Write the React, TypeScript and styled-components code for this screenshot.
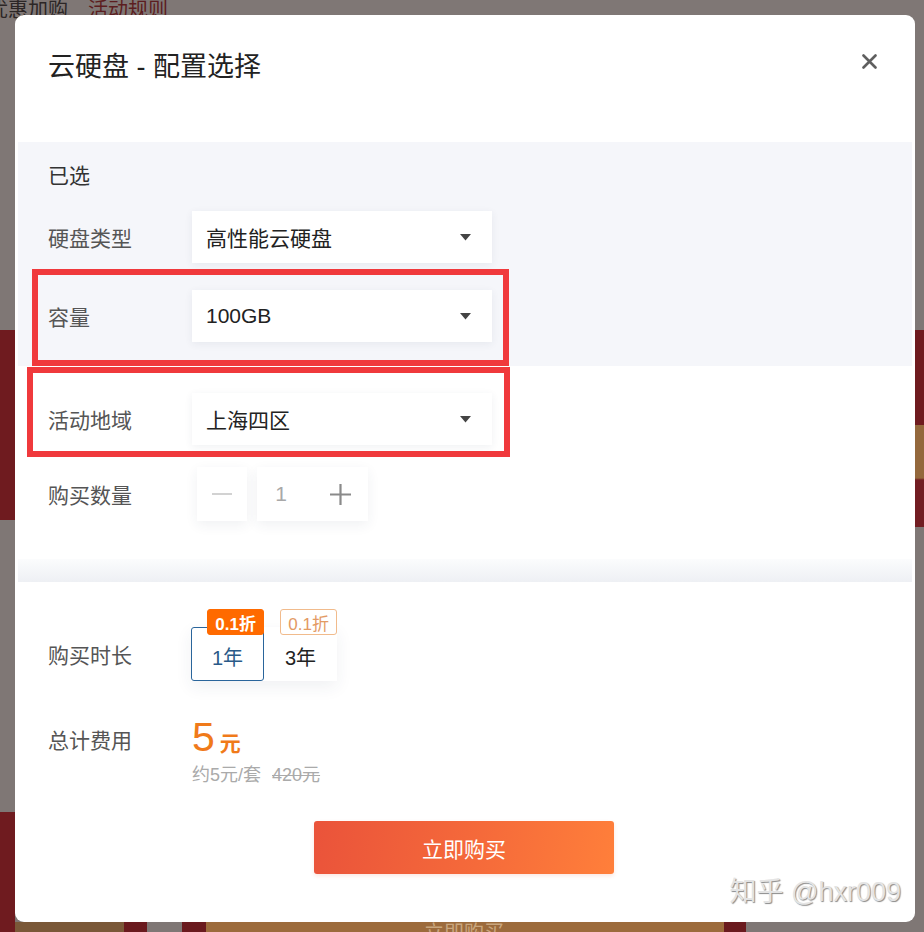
import React from "react";
import styled, { createGlobalStyle } from "styled-components";

const GlobalStyle = createGlobalStyle`
  html, body {
    margin: 0;
    padding: 0;
    height: 100%;
  }
  body {
    font-family: "Liberation Sans", "Noto Sans CJK SC", sans-serif;
    color: #222;
    overflow: hidden;
  }
`;

const Caret = () => (
  <svg width="11" height="7" viewBox="0 0 11 7">
    <path d="M0 0 L11 0 L5.5 6.5 Z" fill="#444" />
  </svg>
);

const CloseIcon = () => (
  <svg width="15" height="15" viewBox="0 0 15 15">
    <path d="M1.5 1.5 L13.5 13.5 M13.5 1.5 L1.5 13.5" stroke="#5f5f5f" strokeWidth="2.6" strokeLinecap="round" />
  </svg>
);

const Select = ({ value }: { value: string }) => (
  <SelectBox>
    <span>{value}</span>
    <Caret />
  </SelectBox>
);

const durations = [
  { label: "1年", badge: "0.1折", active: true },
  { label: "3年", badge: "0.1折", active: false },
];

const App = () => {
  return (
    <>
      <GlobalStyle />
      <Overlay>
        <PageHint>
          <span>优惠加购</span>
          <RuleText>活动规则</RuleText>
        </PageHint>
        <BottomHint>立即购买</BottomHint>
        <Modal>
          <Header>
            <Title>云硬盘 - 配置选择</Title>
            <CloseButton>
              <CloseIcon />
            </CloseButton>
          </Header>

          <GraySection>
            <Chosen>已选</Chosen>
            <Row>
              <Label>硬盘类型</Label>
              <Select value="高性能云硬盘" />
            </Row>
            <Row>
              <Label>容量</Label>
              <Select value="100GB" />
            </Row>
          </GraySection>

          <WhiteSection>
            <Row>
              <Label>活动地域</Label>
              <Select value="上海四区" />
            </Row>
            <Row>
              <Label>购买数量</Label>
              <Stepper>
                <StepButton $muted>
                  <svg width="20" height="20" viewBox="0 0 20 20">
                    <path d="M0 10 H20" stroke="#d2d2d2" strokeWidth="2" />
                  </svg>
                </StepButton>
                <CountGroup>
                  <Count>1</Count>
                  <StepButton>
                    <svg width="21" height="21" viewBox="0 0 21 21">
                      <path d="M0 10.5 H21 M10.5 0 V21" stroke="#8a8a8a" strokeWidth="2.2" />
                    </svg>
                  </StepButton>
                </CountGroup>
              </Stepper>
            </Row>
          </WhiteSection>

          <Divider />

          <LowerSection>
            <Row>
              <Label>购买时长</Label>
              <Durations>
                {durations.map((d) => (
                  <Duration key={d.label} $active={d.active}>
                    <Badge $filled={d.active}>{d.badge}</Badge>
                    {d.label}
                  </Duration>
                ))}
              </Durations>
            </Row>
            <TotalRow>
              <Label>总计费用</Label>
              <PriceBlock>
                <PriceLine>
                  <PriceNum>5</PriceNum>
                  <PriceUnit>元</PriceUnit>
                </PriceLine>
                <SubPrice>
                  约5元/套<OldPrice>420元</OldPrice>
                </SubPrice>
              </PriceBlock>
            </TotalRow>
            <BuyButton>立即购买</BuyButton>
          </LowerSection>

          <Mark $top={254} $left={17} $width={477} $height={97} />
          <Mark $top={352} $left={12} $width={483} $height={90} />
          <Watermark>知乎 @hxr009</Watermark>
        </Modal>
      </Overlay>
    </>
  );
};

const Overlay = styled.div`
  position: fixed;
  inset: 0;
  padding: 15px 9px 10px 15px;
  display: flex;
  flex-direction: column;
  background:
    linear-gradient(
        to bottom,
        transparent 330px,
        #6f1b1f 330px,
        #6f1b1f 520px,
        transparent 520px,
        transparent 812px,
        #6f1b1f 812px
      )
      left top / 15px 100% no-repeat,
    linear-gradient(
        to bottom,
        transparent 330px,
        #6f1b1f 330px,
        #6f1b1f 425px,
        #94683c 425px,
        #94683c 478px,
        #721d22 480px,
        #721d22 527px,
        transparent 527px
      )
      right top / 9px 100% no-repeat,
    linear-gradient(
        to right,
        #7a5838 0,
        #7a5838 124px,
        #6a1a1e 124px,
        #6a1a1e 147px,
        #7f7775 147px,
        #7f7775 182px,
        #6a1a1e 182px,
        #6a1a1e 206px,
        #9c6b3c 206px,
        #9c6b3c 724px,
        #6a1a1e 724px,
        #6a1a1e 746px,
        transparent 746px
      )
      left bottom / 100% 10px no-repeat,
    #7f7775;
  overflow: hidden;
`;

const PageHint = styled.div`
  position: absolute;
  top: -6px;
  left: -12px;
  font-size: 20px;
  color: #2c2626;
  white-space: nowrap;
`;

const RuleText = styled.span`
  margin-left: 20px;
  color: #5c1d20;
`;

const BottomHint = styled.div`
  position: absolute;
  left: 424px;
  bottom: -14px;
  font-size: 20px;
  color: #c9a67e;
`;

const Modal = styled.div`
  position: relative;
  width: 900px;
  height: 907px;
  background: #fff;
  border-radius: 9px;
  padding: 0 3px;
  box-sizing: border-box;
  display: flex;
  flex-direction: column;
`;

const Header = styled.div`
  height: 127px;
  display: flex;
  justify-content: space-between;
  align-items: flex-start;
  padding: 33px 35px 0 30px;
  box-sizing: border-box;
`;

const Title = styled.div`
  font-size: 27px;
  line-height: 38px;
  color: #222;
`;

const CloseButton = styled.div`
  margin-top: 6px;
  width: 15px;
  height: 15px;
  display: flex;
`;

const GraySection = styled.div`
  background: #f5f6fa;
  padding: 18px 30px 24px;
  display: flex;
  flex-direction: column;
  gap: 27px;
`;

const Chosen = styled.div`
  font-size: 21px;
  line-height: 32px;
  color: #333;
  margin-bottom: -8px;
`;

const WhiteSection = styled.div`
  padding: 27px 30px 38px;
  display: flex;
  flex-direction: column;
  gap: 22px;
`;

const Row = styled.div`
  display: flex;
  align-items: center;
`;

const Label = styled.div`
  width: 144px;
  flex-shrink: 0;
  font-size: 21px;
  color: #555;
`;

const SelectBox = styled.div`
  width: 300px;
  height: 52px;
  box-sizing: border-box;
  padding: 0 21px 0 14px;
  background: #fff;
  box-shadow: 0 2px 8px rgba(40, 50, 80, 0.07);
  display: flex;
  align-items: center;
  justify-content: space-between;
  font-size: 21px;
  color: #222;
`;

const Stepper = styled.div`
  display: flex;
  gap: 10px;
  margin-left: 5px;
`;

const CountGroup = styled.div`
  display: flex;
  background: #fff;
  box-shadow: 0 4px 12px rgba(40, 50, 80, 0.07);
`;

const StepButton = styled.div<{ $muted?: boolean }>`
  width: ${(p) => (p.$muted ? "50px" : "55px")};
  height: 54px;
  display: flex;
  align-items: center;
  justify-content: center;
  background: #fff;
  box-shadow: ${(p) => (p.$muted ? "0 4px 12px rgba(40, 50, 80, 0.07)" : "none")};
`;

const Count = styled.div`
  width: 56px;
  height: 54px;
  box-sizing: border-box;
  padding-right: 8px;
  display: flex;
  align-items: center;
  justify-content: center;
  font-size: 21px;
  color: #a8a8a8;
`;

const Divider = styled.div`
  height: 23px;
  background: linear-gradient(to bottom, #fbfcfd, #eef0f4);
`;

const LowerSection = styled.div`
  flex: 1;
  padding: 45px 30px 0;
  display: flex;
  flex-direction: column;
`;

const Durations = styled.div`
  display: flex;
  margin-left: -1px;
  box-shadow: 0 6px 16px rgba(40, 50, 80, 0.07);
`;

const Duration = styled.div<{ $active?: boolean }>`
  position: relative;
  width: 73px;
  height: 54px;
  box-sizing: border-box;
  display: flex;
  align-items: center;
  justify-content: center;
  padding-top: 4px;
  font-size: 20px;
  background: #fff;
  border: 1px solid ${(p) => (p.$active ? "#2a659b" : "transparent")};
  border-radius: 3px;
  color: ${(p) => (p.$active ? "#2a5a88" : "#222")};
`;

const Badge = styled.div<{ $filled?: boolean }>`
  position: absolute;
  top: -19px;
  right: -1px;
  height: 26px;
  box-sizing: border-box;
  padding: 0 7px;
  display: flex;
  align-items: center;
  font-size: 17px;
  font-weight: ${(p) => (p.$filled ? 700 : 400)};
  border-radius: 3px;
  color: ${(p) => (p.$filled ? "#fff" : "#e39a64")};
  background: ${(p) => (p.$filled ? "#ff6a00" : "#fff")};
  border: 1px solid ${(p) => (p.$filled ? "#ff6a00" : "#f1bb8c")};
`;

const TotalRow = styled.div`
  display: flex;
  align-items: flex-start;
  margin-top: 34px;

  & > ${Label} {
    line-height: 44px;
    margin-top: 4px;
  }
`;

const PriceBlock = styled.div`
  display: flex;
  flex-direction: column;
`;

const PriceLine = styled.div`
  display: flex;
  align-items: baseline;
  height: 44px;
  color: #f07a1a;
`;

const PriceNum = styled.span`
  font-size: 41px;
  line-height: 44px;
`;

const PriceUnit = styled.span`
  font-size: 21px;
  font-weight: 700;
  margin-left: 5px;
`;

const SubPrice = styled.div`
  font-size: 18px;
  line-height: 24px;
  margin-top: 4px;
  color: #aaa;
`;

const OldPrice = styled.span`
  margin-left: 11px;
  text-decoration: line-through;
`;

const BuyButton = styled.div`
  align-self: center;
  margin-top: 34px;
  margin-left: -2px;
  width: 300px;
  height: 53px;
  border-radius: 3px;
  background: linear-gradient(100deg, #ea533a 0%, #f56a3a 55%, #ff7f3a 100%);
  color: #fff;
  font-size: 21px;
  display: flex;
  align-items: center;
  justify-content: center;
  box-shadow: 0 2px 4px rgba(230, 90, 50, 0.15);
`;

const Mark = styled.div<{ $top: number; $left: number; $width: number; $height: number }>`
  position: absolute;
  top: ${(p) => p.$top}px;
  left: ${(p) => p.$left}px;
  width: ${(p) => p.$width}px;
  height: ${(p) => p.$height}px;
  box-sizing: border-box;
  border: 6px solid #f0393c;
  pointer-events: none;
`;

const Watermark = styled.div`
  position: absolute;
  right: 14px;
  bottom: 13px;
  font-size: 27px;
  color: #e4e4e4;
  text-shadow: 1px 1px 1px #8a8a8a;
  white-space: nowrap;
`;

export default App;
